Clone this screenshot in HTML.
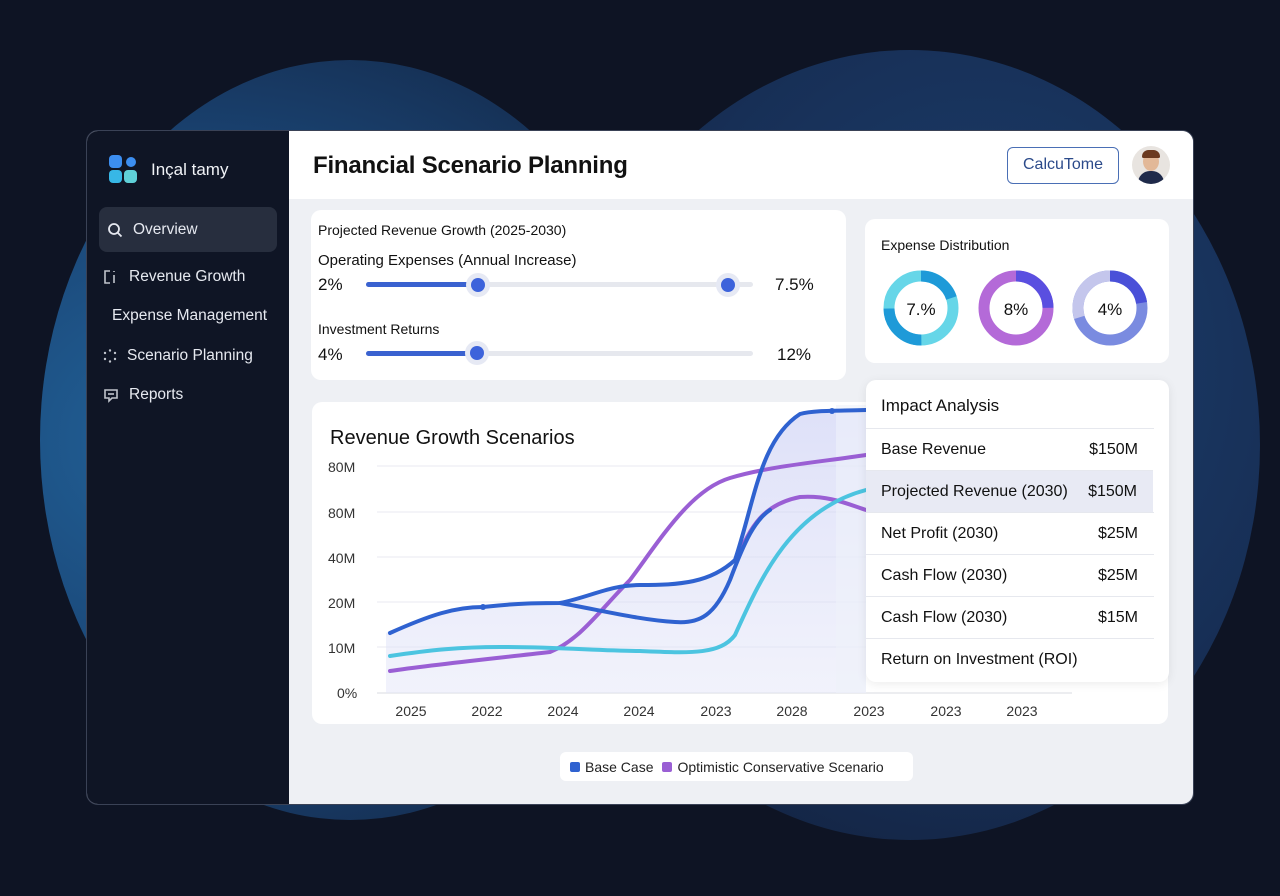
<!DOCTYPE html>
<html><head><meta charset="utf-8"><style>
*{box-sizing:border-box;margin:0;padding:0}
body{width:1280px;height:896px;overflow:hidden;background:#0e1424;font-family:"Liberation Sans",sans-serif;position:relative}
.abs{position:absolute}
.blob{position:absolute;border-radius:50%}
.card{position:absolute;background:#fff;border-radius:10px}
.nav{position:absolute;left:12px;color:#e6e9f0;font-size:15.5px;display:flex;align-items:center;gap:10px}
.row{position:absolute;left:0;width:288px;height:42px;display:flex;justify-content:space-between;align-items:center;padding:0 16px 0 15px;font-size:16px;color:#111;border-top:1px solid #e6e8ee}
</style></head><body>
<div class="blob" style="left:40px;top:60px;width:620px;height:760px;background:radial-gradient(ellipse at 25% 50%,#22639a 0%,#1a4575 50%,#13223f 100%)"></div>
<div class="blob" style="left:560px;top:50px;width:700px;height:790px;background:radial-gradient(ellipse at 60% 40%,#1c3f6e 0%,#172f56 55%,#111b33 100%)"></div>

<div class="abs" style="left:86px;top:130px;width:1108px;height:675px;border-radius:12px;overflow:hidden;background:#eef0f4;border:1px solid #3a4256">
 <div class="abs" style="left:0;top:0;width:202px;height:675px;background:#0f1525">
  <div class="abs" style="left:22px;top:24px;width:30px;height:30px">
   <div class="abs" style="left:0;top:0;width:13px;height:13px;border-radius:4px;background:#3c8ef0"></div>
   <div class="abs" style="left:17px;top:2px;width:10px;height:10px;border-radius:50%;background:#3c8ef0"></div>
   <div class="abs" style="left:0;top:15px;width:13px;height:13px;border-radius:4px;background:#37b7e6"></div>
   <div class="abs" style="left:15px;top:15px;width:13px;height:13px;border-radius:4px;background:#5fd0d8"></div>
  </div>
  <div class="abs" style="left:64px;top:29px;color:#f0f2f6;font-size:17px">Inçal tamy</div>
  <div class="abs" style="left:12px;top:76px;width:178px;height:45px;border-radius:8px;background:#272e3e"></div>
  <div class="nav" style="top:90px;left:20px"><svg width="16" height="16" viewBox="0 0 16 16" fill="none" stroke="#e6e9f0" stroke-width="1.8"><circle cx="7" cy="7" r="5"/><path d="M11 11l3.5 3.5"/></svg>Overview</div>
  <div class="nav" style="top:137px;left:16px"><svg width="16" height="16" viewBox="0 0 16 16" fill="none" stroke="#c0c4cc" stroke-width="1.6"><path d="M7 2H2v12h5M11 6v8M11 2v1"/></svg>Revenue Growth</div>
  <div class="nav" style="top:176px;left:25px">Expense Management</div>
  <div class="nav" style="top:216px;left:16px"><svg width="14" height="14" viewBox="0 0 14 14" fill="#c0c4cc"><circle cx="7" cy="1.5" r="1.2"/><circle cx="12" cy="4" r="1.2"/><circle cx="12" cy="10" r="1.2"/><circle cx="7" cy="12.5" r="1.2"/><circle cx="2" cy="10" r="1.2"/><circle cx="2" cy="4" r="1.2"/></svg>Scenario Planning</div>
  <div class="nav" style="top:255px;left:16px"><svg width="16" height="16" viewBox="0 0 16 16" fill="none" stroke="#c0c4cc" stroke-width="1.6"><path d="M2 3h12v8H9l-3 3v-3H2z"/><path d="M5 7h6"/></svg>Reports</div>
 </div>
 <div class="abs" style="left:202px;top:0;width:906px;height:68px;background:#fff"></div>
 <div class="abs" style="left:226px;top:21px;font-size:24px;color:#111;font-weight:bold;letter-spacing:-0.2px">Financial Scenario Planning</div>
 <div class="abs" style="left:920px;top:16px;width:112px;height:37px;border:1.5px solid #4a6fb5;border-radius:6px;color:#2b4a8a;font-size:16px;text-align:center;line-height:34px">CalcuTome</div>
 <div class="abs" style="left:1045px;top:15px;width:38px;height:38px;border-radius:50%;background:#e8e4e0;overflow:hidden">
  <div class="abs" style="left:11px;top:6px;width:16px;height:19px;border-radius:50%;background:#e2b898"></div>
  <div class="abs" style="left:10px;top:4px;width:18px;height:8px;border-radius:9px 9px 2px 2px;background:#6b3a20"></div>
  <div class="abs" style="left:6px;top:25px;width:26px;height:16px;border-radius:12px 12px 0 0;background:#1f2a4a"></div>
 </div>
</div>

<div class="card" style="left:311px;top:210px;width:535px;height:170px"></div>
<div class="abs" style="left:318px;top:222px;font-size:14px;color:#111">Projected Revenue Growth (2025-2030)</div>
<div class="abs" style="left:318px;top:252px;font-size:15px;color:#111">Operating Expenses (Annual Increase)</div>
<div class="abs" style="left:318px;top:275px;font-size:17px;color:#111">2%</div>
<div class="abs" style="left:775px;top:275px;font-size:17px;color:#111">7.5%</div>
<div class="abs" style="left:366px;top:282px;width:387px;height:5px;border-radius:3px;background:#e6e8ee"></div>
<div class="abs" style="left:366px;top:282px;width:112px;height:5px;border-radius:3px;background:#3a62d0"></div>
<div class="abs" style="left:466px;top:273px;width:24px;height:24px;border-radius:50%;background:#e6e9f4"></div>
<div class="abs" style="left:471px;top:278px;width:14px;height:14px;border-radius:50%;background:#3d63db"></div>
<div class="abs" style="left:716px;top:273px;width:24px;height:24px;border-radius:50%;background:#e6e9f4"></div>
<div class="abs" style="left:721px;top:278px;width:14px;height:14px;border-radius:50%;background:#3d63db"></div>
<div class="abs" style="left:318px;top:321px;font-size:14px;color:#111">Investment Returns</div>
<div class="abs" style="left:318px;top:345px;font-size:17px;color:#111">4%</div>
<div class="abs" style="left:777px;top:345px;font-size:17px;color:#111">12%</div>
<div class="abs" style="left:366px;top:351px;width:387px;height:5px;border-radius:3px;background:#e6e8ee"></div>
<div class="abs" style="left:366px;top:351px;width:112px;height:5px;border-radius:3px;background:#3a62d0"></div>
<div class="abs" style="left:465px;top:341px;width:24px;height:24px;border-radius:50%;background:#e6e9f4"></div>
<div class="abs" style="left:470px;top:346px;width:14px;height:14px;border-radius:50%;background:#3d63db"></div>

<div class="card" style="left:865px;top:219px;width:304px;height:144px"></div>
<div class="abs" style="left:881px;top:237px;font-size:14px;color:#111">Expense Distribution</div>
<svg class="abs" style="left:880px;top:267px" width="280" height="82" viewBox="0 0 280 82">
 <g transform="translate(41,41) rotate(-90)" fill="none" stroke-width="11">
  <circle r="32" stroke="#66d6e8"/>
  <circle r="32" stroke="#1e9ad8" stroke-dasharray="40 201"/>
  <circle r="32" stroke="#1e9ad8" stroke-dasharray="50 201" stroke-dashoffset="-100"/>
 </g>
 <text x="41" y="48" text-anchor="middle" font-size="17" fill="#111" font-family="Liberation Sans">7.%</text>
 <g transform="translate(136,41) rotate(-90)" fill="none" stroke-width="11">
  <circle r="32" stroke="#b46ad8"/>
  <circle r="32" stroke="#5a4fe0" stroke-dasharray="50 201"/>
 </g>
 <text x="136" y="48" text-anchor="middle" font-size="17" fill="#111" font-family="Liberation Sans">8%</text>
 <g transform="translate(230,41) rotate(-90)" fill="none" stroke-width="11">
  <circle r="32" stroke="#7a8be0"/>
  <circle r="32" stroke="#c4c6ec" stroke-dasharray="60 201" stroke-dashoffset="-141"/>
  <circle r="32" stroke="#4a50d8" stroke-dasharray="45 201"/>
 </g>
 <text x="230" y="48" text-anchor="middle" font-size="17" fill="#111" font-family="Liberation Sans">4%</text>
</svg>

<div class="card" style="left:312px;top:402px;width:856px;height:322px"></div>
<div class="abs" style="left:330px;top:427px;font-size:20px;color:#111">Revenue Growth Scenarios</div>
<svg class="abs" style="left:0;top:0" width="1280" height="896">
 <defs><linearGradient id="g" x1="0" y1="0" x2="0" y2="1"><stop offset="0" stop-color="#c8ccf4" stop-opacity=".6"/><stop offset="1" stop-color="#e4e6f8" stop-opacity=".5"/></linearGradient></defs>
 <g stroke="#e8eaf0" stroke-width="1">
  <line x1="377" y1="466" x2="866" y2="466"/><line x1="377" y1="512" x2="866" y2="512"/><line x1="377" y1="557" x2="866" y2="557"/><line x1="377" y1="602" x2="866" y2="602"/><line x1="377" y1="647" x2="866" y2="647"/><line x1="377" y1="693" x2="1072" y2="693" stroke="#d8dbe2"/>
 </g>
 <path d="M386 633 C430 615 455 607 483 607 C520 603 540 603 560 603 C590 597 610 585 640 585 C680 585 710 583 735 560 C755 500 760 440 800 414 L866 410 L866 693 L386 693Z" fill="url(#g)"/>
 <rect x="836" y="405" width="30" height="288" fill="#eef2fa" opacity=".6"/>
 <g fill="none" stroke-width="4" stroke-linecap="round">
  <path d="M390 671 C430 665 480 660 550 652 C580 640 600 610 630 580 C660 540 690 490 730 478 C770 466 820 462 866 455" stroke="#9a5fd4"/>
  <path d="M736 560 C750 530 760 505 800 497 C830 495 850 505 866 510" stroke="#9a5fd4"/>
  <path d="M390 656 C430 650 460 647 500 647 C560 647 600 651 640 651 C690 653 720 655 735 635 C760 580 790 510 866 490" stroke="#4cc4e0"/>
  <path d="M390 633 C430 615 455 607 483 607 C520 603 540 603 560 603 C590 597 610 585 640 585 C680 585 710 583 735 560 C755 500 760 440 800 414 C815 410 840 411 866 410" stroke="#2f62d0"/>
  <path d="M560 603 C600 610 640 620 675 622 C700 624 715 615 730 580 C745 540 755 520 770 510" stroke="#2f62d0"/>
 </g>
 <circle cx="483" cy="607" r="3" fill="#2f62d0"/><circle cx="832" cy="411" r="3" fill="#2f62d0"/>
 <g font-size="14" fill="#333" font-family="Liberation Sans">
  <text x="328" y="472">80M</text><text x="328" y="518">80M</text><text x="328" y="563">40M</text><text x="328" y="608">20M</text><text x="328" y="653">10M</text><text x="337" y="698">0%</text>
  <g text-anchor="middle"><text x="411" y="716">2025</text><text x="487" y="716">2022</text><text x="563" y="716">2024</text><text x="639" y="716">2024</text><text x="716" y="716">2023</text><text x="792" y="716">2028</text><text x="869" y="716">2023</text><text x="946" y="716">2023</text><text x="1022" y="716">2023</text></g>
 </g>
</svg>

<div class="card" style="left:866px;top:380px;width:303px;height:302px;box-shadow:0 2px 10px rgba(0,0,0,.08)">
 <div class="abs" style="left:15px;top:16px;font-size:17px;color:#111">Impact Analysis</div>
 <div class="row" style="top:48px">Base Revenue<span>$150M</span></div>
 <div class="row" style="top:90px;background:#e8eaf4;width:287px">Projected Revenue (2030)<span>$150M</span></div>
 <div class="row" style="top:132px">Net Profit (2030)<span>$25M</span></div>
 <div class="row" style="top:174px">Cash Flow (2030)<span>$25M</span></div>
 <div class="row" style="top:216px">Cash Flow (2030)<span>$15M</span></div>
 <div class="row" style="top:258px">Return on Investment (ROI)<span></span></div>
</div>

<div class="abs" style="left:560px;top:752px;width:353px;height:29px;background:#fff;border-radius:6px;font-size:14px;color:#222;display:flex;align-items:center;padding-left:10px;gap:5px">
 <span style="width:10px;height:10px;background:#2f62d0;border-radius:2px;display:inline-block"></span>Base Case
 <span style="width:10px;height:10px;background:#9a5fd4;border-radius:2px;display:inline-block;margin-left:4px"></span>Optimistic Conservative Scenario
</div>
</body></html>
